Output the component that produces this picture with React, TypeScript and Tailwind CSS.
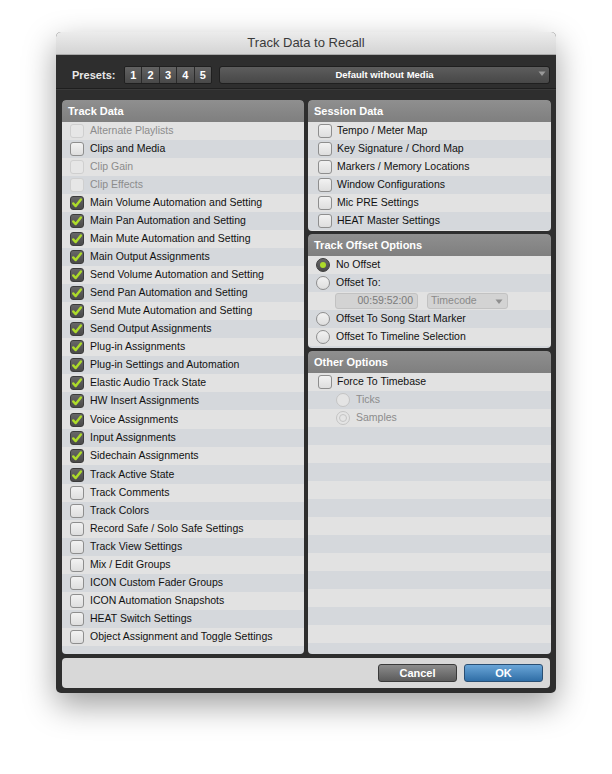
import React from 'react';

type State = 'on' | 'off' | 'disabled';

const trackData: [string, State][] = [
  ['Alternate Playlists', 'disabled'],
  ['Clips and Media', 'off'],
  ['Clip Gain', 'disabled'],
  ['Clip Effects', 'disabled'],
  ['Main Volume Automation and Setting', 'on'],
  ['Main Pan Automation and Setting', 'on'],
  ['Main Mute Automation and Setting', 'on'],
  ['Main Output Assignments', 'on'],
  ['Send Volume Automation and Setting', 'on'],
  ['Send Pan Automation and Setting', 'on'],
  ['Send Mute Automation and Setting', 'on'],
  ['Send Output Assignments', 'on'],
  ['Plug-in Assignments', 'on'],
  ['Plug-in Settings and Automation', 'on'],
  ['Elastic Audio Track State', 'on'],
  ['HW Insert Assignments', 'on'],
  ['Voice Assignments', 'on'],
  ['Input Assignments', 'on'],
  ['Sidechain Assignments', 'on'],
  ['Track Active State', 'on'],
  ['Track Comments', 'off'],
  ['Track Colors', 'off'],
  ['Record Safe / Solo Safe Settings', 'off'],
  ['Track View Settings', 'off'],
  ['Mix / Edit Groups', 'off'],
  ['ICON Custom Fader Groups', 'off'],
  ['ICON Automation Snapshots', 'off'],
  ['HEAT Switch Settings', 'off'],
  ['Object Assignment and Toggle Settings', 'off'],
];

const sessionData = [
  'Tempo / Meter Map',
  'Key Signature / Chord Map',
  'Markers / Memory Locations',
  'Window Configurations',
  'Mic PRE Settings',
  'HEAT Master Settings',
];

const stripe = (i: number) => (i % 2 === 0 ? 'bg-[#e2e2e2]' : 'bg-[#d5d8dc]');

function CheckBox({ state }: { state: State }) {
  if (state === 'on') {
    return (
      <span className="w-[14px] h-[14px] shrink-0 rounded-[3px] border border-[#3c3c3c] bg-gradient-to-b from-[#676767] to-[#4a4a4a] flex items-center justify-center">
        <svg width="12" height="12" viewBox="0 0 12 12">
          <path d="M2.2 6.4 L4.7 9.1 L9.9 2.4" fill="none" stroke="#addb2a" strokeWidth="2.4" strokeLinecap="round" strokeLinejoin="round" />
        </svg>
      </span>
    );
  }
  if (state === 'disabled') {
    return <span className="w-[14px] h-[14px] shrink-0 rounded-[3px] border border-[#cfcfcf] bg-[#e6e6e6]" />;
  }
  return <span className="w-[14px] h-[14px] shrink-0 rounded-[3px] border border-[#8e8e8e] bg-gradient-to-b from-[#f2f2f2] to-[#dedede]" />;
}

function Radio({ state, inner }: { state: State; inner?: boolean }) {
  if (state === 'on') {
    return (
      <span className="w-[14px] h-[14px] shrink-0 rounded-full border border-[#3c3c3c] bg-gradient-to-b from-[#676767] to-[#4a4a4a] flex items-center justify-center">
        <span className="w-[6px] h-[6px] rounded-full bg-[#addb2a]" />
      </span>
    );
  }
  if (state === 'disabled') {
    return (
      <span className="w-[14px] h-[14px] shrink-0 rounded-full border border-[#c4c4c4] bg-[#e4e4e4] flex items-center justify-center">
        {inner && <span className="w-[8px] h-[8px] rounded-full border border-[#c4c4c4]" />}
      </span>
    );
  }
  return <span className="w-[14px] h-[14px] shrink-0 rounded-full border border-[#8e8e8e] bg-gradient-to-b from-[#f2f2f2] to-[#dedede]" />;
}

function Header({ title }: { title: string }) {
  return (
    <div className="h-[22px] shrink-0 rounded-t-[4px] bg-gradient-to-b from-[#8f8f8f] to-[#7f7f7f] flex items-center px-[6px] text-[11px] font-bold text-white">
      {title}
    </div>
  );
}

function Filler({ start, count }: { start: number; count: number }) {
  return (
    <>
      {Array.from({ length: count }).map((_, i) => (
        <div key={i} className={`h-[18px] shrink-0 ${stripe(start + i)}`} />
      ))}
    </>
  );
}

export default function App() {
  return (
    <div className="w-[612px] h-[774px] bg-white pt-[32px] pl-[56px]" style={{ fontFamily: '"Liberation Sans", Arial, sans-serif' }}>
      <div className="w-[500px] rounded-[5px] overflow-hidden bg-[#2e2e2e] shadow-[0_12px_32px_rgba(0,0,0,0.38)] pb-[5px]">
        {/* title bar */}
        <div className="h-[23px] bg-gradient-to-b from-[#ececec] to-[#d4d4d4] border-b border-[#a9a9a9] flex items-center justify-center text-[13px] text-[#3a3a3a]">
          Track Data to Recall
        </div>

        {/* presets */}
        <div className="h-[34px] flex items-start pt-[11px] pl-[16px] pr-[6px] border-b border-[#1e1e1e]">
          <span className="text-[11px] font-bold text-[#e8e8e8] w-[52px] leading-[18px]">Presets:</span>
          <div className="flex h-[18px] w-[88px] rounded-[2px] border border-[#1f1f1f] overflow-hidden">
            {['1', '2', '3', '4', '5'].map((n, i) => (
              <div key={n} className={`flex-1 flex items-center justify-center bg-gradient-to-b from-[#626262] to-[#494949] text-[11px] font-bold text-white ${i < 4 ? 'border-r border-[#2a2a2a]' : ''}`}>
                {n}
              </div>
            ))}
          </div>
          <div className="relative ml-[7px] flex-1 h-[18px] rounded-[3px] border border-[#1f1f1f] bg-gradient-to-b from-[#5d5d5d] to-[#474747] flex items-center justify-center text-[9.5px] font-bold text-white">
            Default without Media
            <svg className="absolute right-[3px] top-[4px]" width="8" height="6" viewBox="0 0 8 6">
              <path d="M0.5 0.5 L7.5 0.5 L4 5 Z" fill="#9a9a9a" />
            </svg>
          </div>
        </div>

        {/* panels */}
        <div className="flex gap-[4px] pl-[6px] pr-[5px] pt-[10px] border-t border-[#3a3a3a]">
          <div className="w-[242px] h-[554px] flex flex-col rounded-[4px] overflow-hidden">
            <Header title="Track Data" />
            <div className="flex-1 flex flex-col overflow-hidden">
              {trackData.map(([label, state], i) => (
                <div key={label} className={`${i === 16 || i === 19 ? 'h-[19px]' : 'h-[18px]'} shrink-0 flex items-center pl-[8px] gap-[6px] text-[10.5px] ${stripe(i)} ${state === 'disabled' ? 'text-[#8c8c8c]' : 'text-[#111]'}`}>
                  <CheckBox state={state} />
                  <span>{label}</span>
                </div>
              ))}
              <Filler start={trackData.length} count={2} />
            </div>
          </div>

          <div className="w-[243px] h-[554px] flex flex-col gap-[3px]">
            <div className="h-[131px] flex flex-col rounded-[4px] overflow-hidden">
              <Header title="Session Data" />
              <div className="flex-1 flex flex-col overflow-hidden">
                {sessionData.map((label, i) => (
                  <div key={label} className={`h-[18px] shrink-0 flex items-center pl-[10px] gap-[5px] text-[10.5px] text-[#111] ${stripe(i)}`}>
                    <CheckBox state="off" />
                    <span>{label}</span>
                  </div>
                ))}
                <Filler start={6} count={1} />
              </div>
            </div>

            <div className="h-[114px] flex flex-col rounded-[4px] overflow-hidden">
              <Header title="Track Offset Options" />
              <div className="flex-1 flex flex-col overflow-hidden text-[10.5px] text-[#111]">
                <div className={`h-[18px] shrink-0 flex items-center pl-[8px] gap-[6px] ${stripe(0)}`}>
                  <Radio state="on" />
                  <span>No Offset</span>
                </div>
                <div className={`h-[18px] shrink-0 flex items-center pl-[8px] gap-[6px] ${stripe(1)}`}>
                  <Radio state="off" />
                  <span>Offset To:</span>
                </div>
                <div className={`h-[18px] shrink-0 flex items-center pl-[27px] gap-[9px] ${stripe(0)}`}>
                  <div className="w-[83px] h-[16px] rounded-[3px] border border-[#c2c2c2] bg-[#d3d3d3] flex items-center justify-end pr-[4px] text-[#7b7b7b]">
                    00:59:52:00
                  </div>
                  <div className="relative w-[81px] h-[16px] rounded-[3px] border border-[#c2c2c2] bg-[#d3d3d3] flex items-center pl-[3px] text-[#8a8a8a]">
                    Timecode
                    <svg className="absolute right-[4px] top-[5px]" width="8" height="6" viewBox="0 0 8 6">
                      <path d="M0.5 0.5 L7.5 0.5 L4 5 Z" fill="#8f8f8f" />
                    </svg>
                  </div>
                </div>
                <div className={`h-[18px] shrink-0 flex items-center pl-[8px] gap-[6px] ${stripe(1)}`}>
                  <Radio state="off" />
                  <span>Offset To Song Start Marker</span>
                </div>
                <div className={`h-[18px] shrink-0 flex items-center pl-[8px] gap-[6px] ${stripe(0)}`}>
                  <Radio state="off" />
                  <span>Offset To Timeline Selection</span>
                </div>
                <Filler start={1} count={1} />
              </div>
            </div>

            <div className="flex-1 flex flex-col rounded-[4px] overflow-hidden">
              <Header title="Other Options" />
              <div className="flex-1 flex flex-col overflow-hidden text-[10.5px]">
                <div className={`h-[18px] shrink-0 flex items-center pl-[10px] gap-[5px] text-[#111] ${stripe(0)}`}>
                  <CheckBox state="off" />
                  <span>Force To Timebase</span>
                </div>
                <div className={`h-[18px] shrink-0 flex items-center pl-[28px] gap-[6px] text-[#8c8c8c] ${stripe(1)}`}>
                  <Radio state="disabled" />
                  <span>Ticks</span>
                </div>
                <div className={`h-[18px] shrink-0 flex items-center pl-[28px] gap-[6px] text-[#8c8c8c] ${stripe(0)}`}>
                  <Radio state="disabled" inner />
                  <span>Samples</span>
                </div>
                <Filler start={3} count={14} />
              </div>
            </div>
          </div>
        </div>

        {/* footer */}
        <div className="mx-[6px] mt-[4px] h-[30px] rounded-[4px] bg-[#d8d8d8] flex items-center justify-end gap-[7px] pr-[7px]">
          <button className="w-[79px] h-[18px] rounded-[3px] border border-[#3a3a3a] bg-gradient-to-b from-[#8c8c8c] to-[#5b5b5b] text-[11px] font-bold text-white">
            Cancel
          </button>
          <button className="w-[79px] h-[18px] rounded-[3px] border border-[#2a4f73] bg-gradient-to-b from-[#6aa6d8] to-[#2f6ea6] text-[11px] font-bold text-white">
            OK
          </button>
        </div>
      </div>
    </div>
  );
}
